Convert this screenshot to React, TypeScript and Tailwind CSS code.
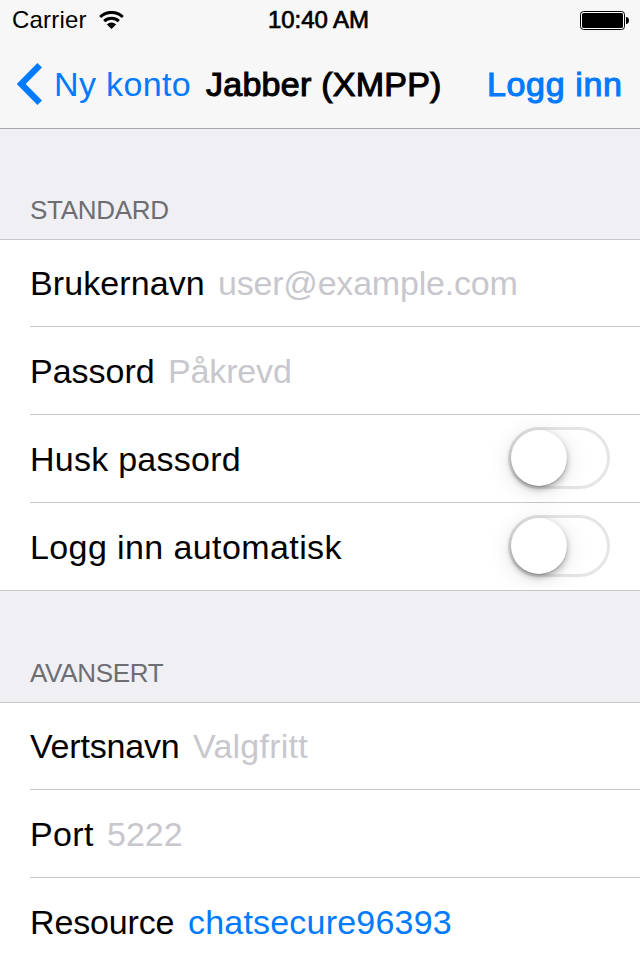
import type { ReactNode } from "react";

function StatusBar() {
  return (
    <div className="grid h-10 grid-cols-3 items-center pl-3 pr-[11px]">
      <div className="flex items-center gap-[12px]">
        <span className="text-[24px] leading-10 tracking-[0.2px]">Carrier</span>
        <svg width="25" height="18" viewBox="0 0 25 18" fill="none" stroke="#000" strokeWidth="3">
          <path d="M1.2 6A16.2 16.2 0 0 1 23.8 6" />
          <path d="M5.2 10.2A10.6 10.6 0 0 1 19.8 10.2" />
          <path d="M12.5 18L7.9 13.4A6.6 6.6 0 0 1 17.1 13.4Z" fill="#000" stroke="none" />
        </svg>
      </div>
      <span className="mr-1 text-center text-[24px] leading-10 tracking-[-0.05px] [-webkit-text-stroke:0.7px_#000]">10:40 AM</span>
      <svg className="justify-self-end" width="49" height="19" viewBox="0 0 49 19">
        <rect x="0.5" y="0.5" width="44" height="18" rx="3" fill="#fff" stroke="#000" />
        <rect x="2" y="2" width="41" height="15" rx="1.6" />
        <path d="M46 6C48 6 49 7.6 49 9.5S48 13 46 13Z" />
      </svg>
    </div>
  );
}

function NavBar() {
  return (
    <div className="flex h-[88px] items-center whitespace-nowrap pl-[17px] text-[34px] leading-10">
      <svg className="shrink-0" width="26" height="42" viewBox="0 0 26 42" fill="none" stroke="#007aff" strokeWidth="6.4">
        <path d="M22.7 2.3L4.2 21L22.7 39.7" />
      </svg>
      <span className="ml-[11px] w-[152px] tracking-[0.35px] text-[#007aff]">Ny konto</span>
      <h1 className="w-[281px] tracking-[0.25px] [-webkit-text-stroke:1.1px_#000]">Jabber (XMPP)</h1>
      <span className="tracking-[0.65px] text-[#007aff] [-webkit-text-stroke:1.1px_#007aff]">Logg inn</span>
    </div>
  );
}

function SectionHeader({ children }: { children: ReactNode }) {
  return (
    <h2 className="flex h-full items-end pb-[13px] pl-[30px] text-[26px] leading-8 tracking-[-0.3px] text-[#6d6d72]">{children}</h2>
  );
}

function Row({ label, children, last }: { label: ReactNode; children?: ReactNode; last?: boolean }) {
  return (
    <div className={"ml-[30px] flex h-[88px] items-center whitespace-nowrap pr-[30px] text-[34px] leading-10 " + (last ? "pb-px" : "border-b border-[#c8c7cc]")}>
      {label}
      {children}
    </div>
  );
}

function Toggle() {
  return (
    <div className="ml-auto mb-[2px] h-[62px] w-[102px] rounded-full border-[3px] border-[#e5e5e5]">
      <div className="h-14 w-14 rounded-full bg-white shadow-[0_3px_6px_rgba(0,0,0,0.3),0_1px_1px_rgba(0,0,0,0.16),0_4px_24px_rgba(0,0,0,0.13)]" />
    </div>
  );
}

export default function App() {
  return (
    <div className="h-[960px] w-[640px] overflow-hidden bg-[#efeff4] font-['Liberation_Sans',Arial,sans-serif] text-black">
      <header className="h-[129px] border-b border-[#a7a7ab] bg-[#f7f7f7]">
        <StatusBar />
        <NavBar />
      </header>
      <div className="h-[110px]">
        <SectionHeader>STANDARD</SectionHeader>
      </div>
      <section className="h-[352px] overflow-hidden border-y border-[#c8c7cc] bg-white">
        <div className="-mt-px">
          <Row label={<span className="w-[188px] tracking-[0.1px]">Brukernavn</span>}>
            <span className="tracking-[-0.2px] text-[#c7c7cd]">user@example.com</span>
          </Row>
          <Row label={<span className="w-[138px]">Passord</span>}>
            <span className="tracking-[-0.15px] text-[#c7c7cd]">Påkrevd</span>
          </Row>
          <Row label={<span className="tracking-[0.25px]">Husk passord</span>}><Toggle /></Row>
          <Row last label={<span className="tracking-[0.4px]">Logg inn automatisk</span>}><Toggle /></Row>
        </div>
      </section>
      <div className="h-[111px]">
        <SectionHeader>AVANSERT</SectionHeader>
      </div>
      <section className="border-t border-[#c8c7cc] bg-white">
        <div className="-mt-px">
          <Row label={<span className="w-[163px] tracking-[-0.2px]">Vertsnavn</span>}>
            <span className="tracking-[0.25px] text-[#c7c7cd]">Valgfritt</span>
          </Row>
          <Row label={<span className="w-[77px] tracking-[0.35px]">Port</span>}>
            <span className="text-[#c7c7cd]">5222</span>
          </Row>
          <Row last label={<span className="w-[158px] tracking-[-0.15px]">Resource</span>}>
            <span className="tracking-[0.2px] text-[#007aff]">chatsecure96393</span>
          </Row>
        </div>
      </section>
    </div>
  );
}
